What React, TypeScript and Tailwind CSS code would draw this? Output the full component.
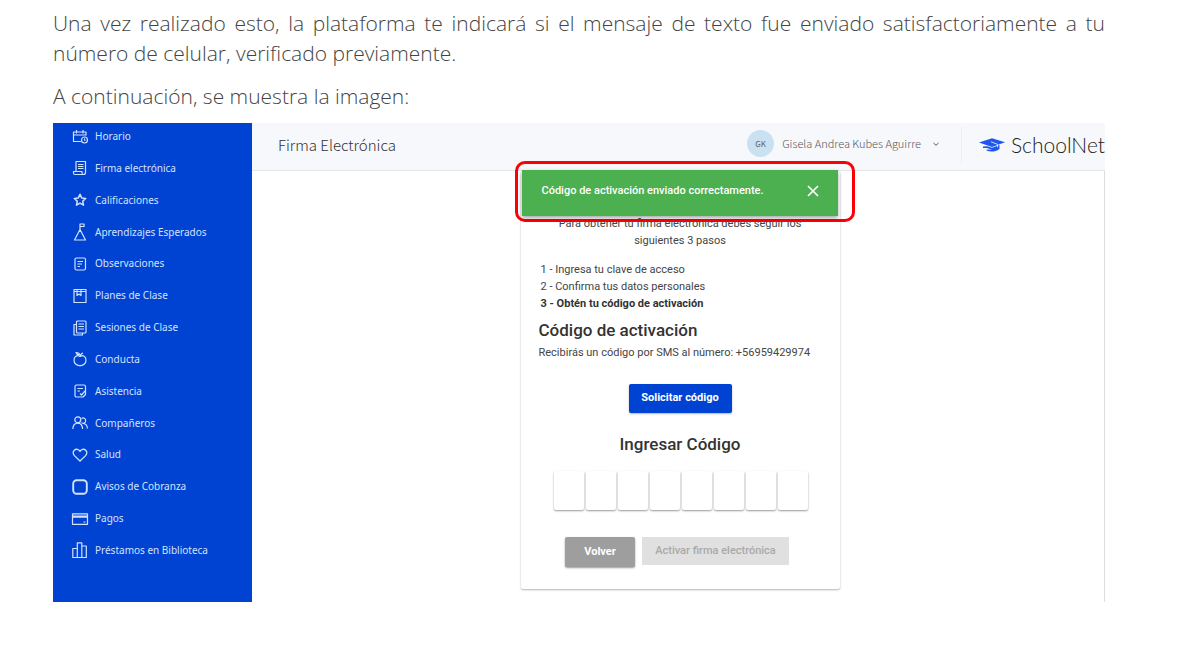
import { useState } from "react";
import type { ReactNode } from "react";

type MenuItem = { label: string; icon: ReactNode };

const MENU: MenuItem[] = [
	{
		label: "Horario",
		icon: (
			<>
				<path d="M14 6.500V3H1.500v9.500H9M1.500 6H14M4.500 1v3.500M11 1v3.500" />
				<circle cx="12.500" cy="11" r="3" />
				<path d="M12.500 9.500V11l1 .5" />
			</>
		),
	},
	{
		label: "Firma electrónica",
		icon: (
			<>
				<path d="M4 11V1.500h9.500v11a2 2 0 0 1-2 2H3a1.500 1.500 0 0 1-1.500-1.500V11.500H10V13a1.500 1.500 0 0 0 1.500 1.500" />
				<path d="M6 4.500h5.500M6 6.500h5.500M6 8.500h5.500" />
			</>
		),
	},
	{
		label: "Calificaciones",
		icon: <path strokeWidth={1.5} d="m8 2.200 1.700 3.700 4 .5-3 2.800.8 4L8 11.200l-3.500 2 .8-4-3-2.800 4-.5Z" />,
	},
	{
		label: "Aprendizajes Esperados",
		icon: <path d="M8 5.500 13.500 16h-11L8 5.500V0h4v2.500H8M7 7.500h2" />,
	},
	{
		label: "Observaciones",
		icon: (
			<>
				<rect x="3" y="2" width="10.500" height="12" rx="1.500" />
				<path d="M5.500 5.500H11M5.500 8H10M5.500 10.500H8" />
			</>
		),
	},
	{
		label: "Planes de Clase",
		icon: <path d="M2 1.500h12v13H2ZM2 3.500h12M5 1.500v6l2-1.500 2 1.500v-6" />,
	},
	{
		label: "Sesiones de Clase",
		icon: (
			<>
				<rect x="4.500" y="1" width="9.500" height="12" rx="1" />
				<path d="M4.500 4.500H2V15h8.500v-2M6.500 4H12M6.500 6.500H12M6.500 9H12" />
			</>
		),
	},
	{
		label: "Conducta",
		icon: (
			<>
				<path d="M8 5.500C5 3.500 2 5.500 2 9.200 2 12.500 5 15 8 14.500c3 .5 6-2 6-5.300 0-3.700-3-5.700-6-3.700Z" />
				<path d="M8.500 5.500c0-2 1-3 2.500-3.500M8 4C6 4 4.500 3 4 1.500c2 0 3.500.5 4 2.500Z" />
			</>
		),
	},
	{
		label: "Asistencia",
		icon: (
			<>
				<path d="M13.500 8V3.500a1.500 1.500 0 0 0-1.500-1.500H4.500A1.500 1.500 0 0 0 3 3.500v9A1.500 1.500 0 0 0 4.500 14H11l2.500-2.500V8M5.500 5.500H11M5.500 8H8" />
				<path d="m8 10.500 1.500 1.500 3.500-4" />
			</>
		),
	},
	{
		label: "Compañeros",
		icon: (
			<>
				<circle cx="5.800" cy="4.800" r="3" />
				<path d="M.8 14c.3-3.500 2-5.800 5-5.800s4.500 2.300 4.900 5.800M9.500 3.500c2-1.300 4.200 0 4.200 2.200 0 2.500-3 3.300-4.200 1.800M11.500 8.500c2.300.2 3.700 2.300 3.900 5" />
			</>
		),
	},
	{
		label: "Salud",
		icon: <path strokeWidth={1.3} d="M8 14 2.400 8.600C.8 7 .8 4.500 2.300 3.200 4 1.700 6.700 2 8 4.400 9.300 2 12 1.700 13.700 3.200c1.500 1.300 1.500 3.800-.1 5.400Z" />,
	},
	{
		label: "Avisos de Cobranza",
		icon: <rect x="1.200" y="1.200" width="13.600" height="13.600" rx="3.500" strokeWidth={1.9} />,
	},
	{
		label: "Pagos",
		icon: <path d="M.5 2.800h15v10.500H.5ZM.5 5h15M.5 6.200h15M11.500 11h2" />,
	},
	{
		label: "Préstamos en Biblioteca",
		icon: <path d="M.8 6.500h4.500v9H.8ZM5.300.8h4.500v14.700H5.300ZM9.800 4h4.500v11.500H9.800Z" />,
	},
];

const CODE_LENGTH = 8;

function Sidebar() {
	return (
		<nav className="w-[199px] shrink-0 bg-[#0043d3] pb-[38px] flex flex-col justify-between font-['Noto_Sans',sans-serif]">
			{MENU.map(item => (
				<a key={item.label} href="#" className="h-[27px] pl-[19px] flex items-center gap-[7px] text-[10px] text-[#d3e2fb]">
					<svg className="w-4 h-4 shrink-0 overflow-visible" viewBox="0 0 16 16" fill="none" stroke="currentColor" strokeWidth="1.200" strokeLinejoin="round">
						{item.icon}
					</svg>
					{item.label}
				</a>
			))}
		</nav>
	);
}

function Header() {
	return (
		<header className="h-12 shrink-0 bg-[#f7f8fb] border-b border-[#e4e6ea] flex items-center pl-[26px] pb-[3px]">
			<h1 className="flex-1 text-[15px] font-light text-[#333]">Firma Electrónica</h1>
			<button type="button" className="flex items-center gap-2 pr-[22px] -mt-[3px] text-[11px] font-light text-[#555]">
				<span className="w-[27px] h-[27px] rounded-full bg-[#c9e1f1] flex items-center justify-center text-[8px] font-normal text-[#666]">GK</span>
				Gisela Andrea Kubes Aguirre
				<svg className="w-[6px] h-[6px] ml-1" viewBox="0 0 6 6" fill="none" stroke="currentColor">
					<path d="m.5 2 2.500 2.300L5.500 2" />
				</svg>
			</button>
			<div className="h-9 border-l border-[#eceef1] pl-[17px] flex items-center gap-[6px] text-[21px] text-[#222] font-light font-['Lato',sans-serif]">
				<svg className="w-[26px] h-4" viewBox="0 0 26 16">
					<path fill="#1f57ee" d="M0 5.500 13 1.300l13 4L13 10Z" />
					<path fill="#1f57ee" d="m8.500 9.300 4.500 1.400 7.500-2.700v4c-4 3-9 3.200-13 1.600v-1l5.500.1-5-1.800H4V9.500Z" />
					<path fill="none" stroke="#f7f8fb" strokeWidth="0.800" d="m12 4.800 6.500 2.500v3" />
				</svg>
				SchoolNet
			</div>
		</header>
	);
}

function Toast({ onClose }: { onClose: () => void }) {
	return (
		<div className="absolute -top-[10px] -left-[6px] w-[340px] h-[61px] border-3 border-[#fb0007] rounded-[10px] pt-[6px] pl-1 pr-[14px] pb-[3px] font-['Roboto',sans-serif]">
			<div role="status" className="h-full bg-[#4caf50] shadow-[0_2px_4px_rgba(0,0,0,0.35)] flex items-center justify-between pl-5 pr-[19px] pb-1 text-[11px] font-medium text-white">
				Código de activación enviado correctamente.
				<button type="button" aria-label="Cerrar" onClick={onClose}>
					<svg className="w-3 h-3" viewBox="0 0 12 12" fill="none" stroke="currentColor" strokeWidth="1.700">
						<path d="m1 1 10 10M11 1 1 11" />
					</svg>
				</button>
			</div>
		</div>
	);
}

function ActivationCard() {
	const [code, setCode] = useState<string[]>(Array(CODE_LENGTH).fill(""));
	const [showToast, setShowToast] = useState(true);

	const handleDigit = (index: number, value: string) => {
		setCode(code.map((digit, i) => (i === index ? value : digit)));
	};

	return (
		<div className="relative w-[319px]">
			<form className="bg-white rounded-[2px] shadow-[0_1px_2px_rgba(0,0,0,0.3)] pt-11 px-[18px] pb-[22px] text-[11px] text-[#444] font-['Roboto',sans-serif]" onSubmit={e => e.preventDefault()}>
				<p className="px-4 text-center leading-[17px]">Para obtener tu firma electrónica debes seguir los siguientes 3 pasos</p>
				<ol className="mt-3 pl-[2px] leading-[17px]">
					<li>1 - Ingresa tu clave de acceso</li>
					<li>2 - Confirma tus datos personales</li>
					<li className="font-bold text-[#333]">3 - Obtén tu código de activación</li>
				</ol>
				<h2 className="mt-[7px] text-[17px] leading-[22px] font-medium text-[#333]">Código de activación</h2>
				<p className="mt-[3px] leading-[17px]">Recibirás un código por SMS al número: +56959429974</p>
				<button type="button" className="mt-[23px] mx-auto block w-[103px] h-[29px] rounded-[2px] bg-[#0043d3] font-bold text-white shadow-[0_1px_2px_rgba(0,0,0,0.3)]">
					Solicitar código
				</button>
				<h2 className="mt-5 text-center text-[17px] leading-[22px] font-medium text-[#333]">Ingresar Código</h2>
				<div className="mt-4 pl-[2px] flex justify-center gap-[2px]">
					{code.map((digit, i) => (
						<input
							key={i}
							type="text"
							maxLength={1}
							aria-label={`Dígito ${i + 1}`}
							value={digit}
							onChange={e => handleDigit(i, e.target.value)}
							className="w-[30px] h-[39px] bg-white rounded-[2px] text-center shadow-[0_1px_2px_rgba(0,0,0,0.4)]"
						/>
					))}
				</div>
				<div className="mt-[27px] pr-[6px] flex justify-center gap-[7px]">
					<button type="button" className="w-[70px] h-[30px] rounded-[2px] bg-[#9e9e9e] font-bold text-white shadow-[0_1px_2px_rgba(0,0,0,0.4)]">Volver</button>
					<button type="submit" disabled className="w-[147px] h-7 bg-[#e0e0e0] font-medium text-[#a9a9a9]">Activar firma electrónica</button>
				</div>
			</form>
			{showToast && <Toast onClose={() => setShowToast(false)} />}
		</div>
	);
}

export default function App() {
	return (
		<article className="bg-white pt-2 pl-[53px] pr-[84px] pb-14 font-['Noto_Sans_CJK_SC',sans-serif]">
			<div className="text-[21px] leading-[30px] font-light text-[#444] font-['Open_Sans',sans-serif]">
				<p className="text-justify">
					Una vez realizado esto, la plataforma te indicará si el mensaje de texto fue enviado satisfactoriamente a tu número de celular, verificado previamente.
				</p>
				<p className="mt-[13px]">A continuación, se muestra la imagen:</p>
			</div>
			<div className="mt-3 flex">
				<Sidebar />
				<div className="flex-1 min-w-0 flex flex-col">
					<Header />
					<main className="flex-1 flex justify-center items-start pl-1 pb-[13px] border-r border-[#ddd]">
						<ActivationCard />
					</main>
				</div>
			</div>
		</article>
	);
}
